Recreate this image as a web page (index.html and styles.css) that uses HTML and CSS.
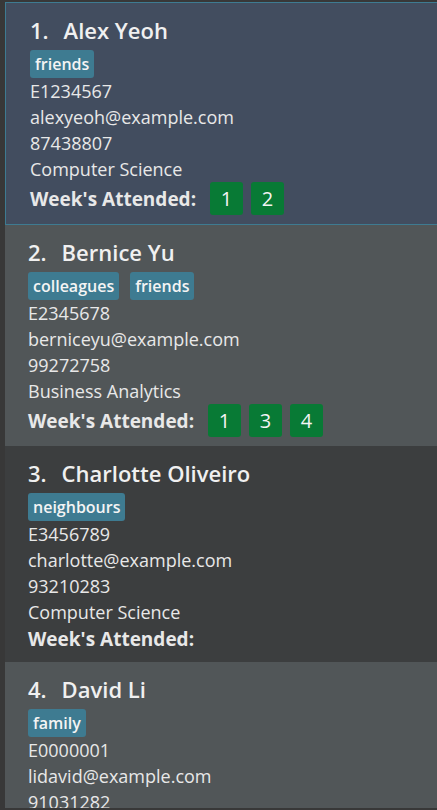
FILE: index.html
```html
<!DOCTYPE html>
<html>
<head>
<meta charset="utf-8">
<link rel="stylesheet" href="styles.css">
</head>
<body>
<div class="list">
  <div class="card selected">
    <div class="name-row"><span class="idx">1.</span><span class="name">Alex Yeoh</span></div>
    <div class="tags"><span class="tag">friends</span></div>
    <div class="line">E1234567</div>
    <div class="line">alexyeoh@example.com</div>
    <div class="line">87438807</div>
    <div class="line">Computer Science</div>
    <div class="weeks"><span class="wlabel">Week's Attended:</span><span class="wk">1</span><span class="wk">2</span></div>
  </div>
  <div class="card light">
    <div class="name-row"><span class="idx">2.</span><span class="name">Bernice Yu</span></div>
    <div class="tags"><span class="tag">colleagues</span><span class="tag">friends</span></div>
    <div class="line">E2345678</div>
    <div class="line">berniceyu@example.com</div>
    <div class="line">99272758</div>
    <div class="line">Business Analytics</div>
    <div class="weeks"><span class="wlabel">Week's Attended:</span><span class="wk">1</span><span class="wk">3</span><span class="wk">4</span></div>
  </div>
  <div class="card dark">
    <div class="name-row"><span class="idx">3.</span><span class="name">Charlotte Oliveiro</span></div>
    <div class="tags"><span class="tag">neighbours</span></div>
    <div class="line">E3456789</div>
    <div class="line">charlotte@example.com</div>
    <div class="line">93210283</div>
    <div class="line">Computer Science</div>
    <div class="weeks"><span class="wlabel">Week's Attended:</span></div>
  </div>
  <div class="card light last">
    <div class="name-row"><span class="idx">4.</span><span class="name">David Li</span></div>
    <div class="tags"><span class="tag">family</span></div>
    <div class="line">E0000001</div>
    <div class="line">lidavid@example.com</div>
    <div class="line">91031282</div>
  </div>
</div>
</body>
</html>
```
FILE: styles.css
```css
html, body {
  margin: 0;
  padding: 0;
  background: #383838;
  overflow: hidden;
}
body {
  font-family: "Open Sans", "Noto Sans", sans-serif;
  color: #e8e8e8;
}
.list {
  height: 808px;
  overflow: hidden;
  padding: 2px 0 0 5px;
  box-sizing: border-box;
  display: flex;
  flex-direction: column;
}
.card {
  flex: none;
  padding: 12px 0 9px 23px;
  display: flex;
  flex-direction: column;
}
.card.selected {
  background: #424d5f;
  border: 1px solid #3e7b91;
  border-right: none;
  padding-left: 24px;
}
.card.light { background: #515658; }
.card.dark { background: #3c3e3f; }
.card.last { flex: 1 0 auto; }
.name-row {
  display: flex;
  gap: 15px;
  font-size: 22px;
  font-weight: 600;
  line-height: 30px;
  height: 30px;
  color: #f0f0f0;
}
.tags {
  display: flex;
  gap: 11px;
  margin-top: 5px;
  height: 28px;
}
.tag {
  background: #3e7b91;
  color: #f4f4f4;
  font-size: 16px;
  font-weight: 600;
  line-height: 28px;
  padding: 0 5px;
  border-radius: 3px;
}
.line {
  font-size: 18px;
  line-height: 26px;
  height: 26px;
}
.weeks {
  display: flex;
  align-items: center;
  min-height: 28px;
}
.wlabel {
  font-size: 19px;
  font-weight: 700;
  line-height: 28px;
  margin-right: 14px;
}
.wk {
  width: 33px;
  height: 33px;
  margin-right: 8px;
  background: #087a35;
  border-radius: 3px;
  color: #f4f4f4;
  font-size: 20px;
  line-height: 33px;
  text-align: center;
}
```
